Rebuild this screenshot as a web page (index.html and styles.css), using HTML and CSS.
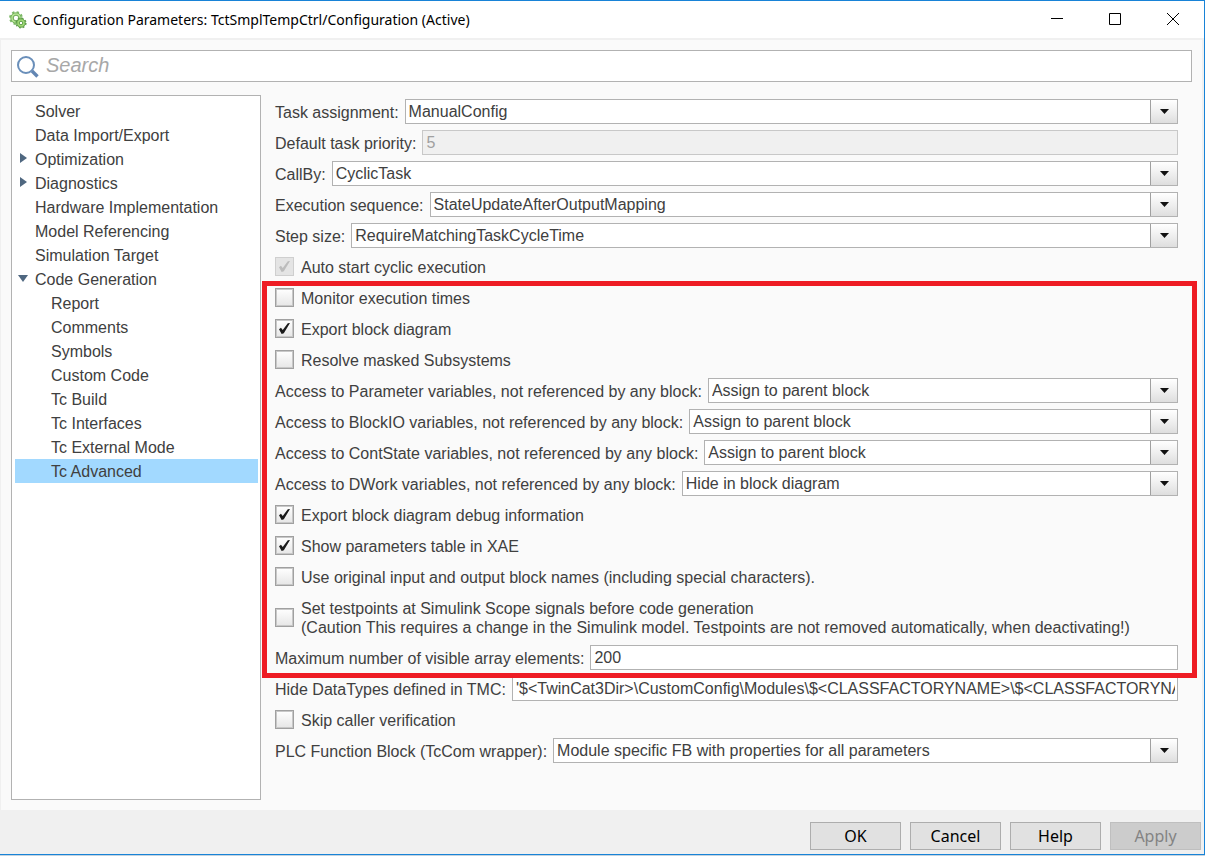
FILE: index.html
```html
<!DOCTYPE html>
<html lang="en">
<head>
<meta charset="utf-8">
<title>Configuration Parameters: TctSmplTempCtrl/Configuration (Active)</title>
<link rel="stylesheet" href="styles.css">
</head>
<body>
<div class="window">
  <header class="titlebar">
    <svg class="app-icon" viewBox="0 0 18 18" aria-hidden="true">
      <circle cx="7" cy="7" r="6" fill="none" stroke="#7cb866" stroke-width="1.800" stroke-dasharray="2.400 2.300"/>
      <circle cx="7" cy="7" r="5.200" fill="#b4e392" stroke="#76b35e" stroke-width="1"/>
      <circle cx="7" cy="7" r="2.800" fill="#fff" stroke="#6aa653" stroke-width="1"/>
      <circle cx="12" cy="12" r="4.800" fill="none" stroke="#5f9e4a" stroke-width="1.600" stroke-dasharray="1.900 1.870"/>
      <circle cx="12" cy="12" r="4.200" fill="#a4dd78" stroke="#5a9a46" stroke-width="1"/>
      <circle cx="12" cy="12" r="1.800" fill="#fff" stroke="#5a9a46" stroke-width="1"/>
    </svg>
    <h1 class="title">Configuration Parameters: TctSmplTempCtrl/Configuration (Active)</h1>
    <div class="caption-buttons">
      <button type="button" class="caption-button" aria-label="Minimize"><svg viewBox="0 0 14 14"><path d="M1 6.500H13" /></svg></button>
      <button type="button" class="caption-button" aria-label="Maximize"><svg viewBox="0 0 14 14"><path d="M1.500 1.500H12.500V12.500H1.500Z" /></svg></button>
      <button type="button" class="caption-button" aria-label="Close"><svg viewBox="0 0 14 14"><path d="M1 1L13 13M13 1L1 13" /></svg></button>
    </div>
  </header>

  <main class="content">
    <label class="search">
      <svg class="search-icon" viewBox="0 0 24 24" aria-hidden="true">
        <circle cx="10" cy="10" r="8" fill="none" stroke="#6a8fba" stroke-width="2"/>
        <path d="M16 16L21.500 21.500" stroke="#6286b3" stroke-width="3.400"/>
      </svg>
      <input class="search-input" type="search" placeholder="Search" aria-label="Search">
    </label>

    <div class="panes">
      <nav class="tree" aria-label="Categories">
        <ul>
          <li><a href="#">Solver</a></li>
          <li><a href="#">Data Import/Export</a></li>
          <li><a href="#" class="closed">Optimization</a></li>
          <li><a href="#" class="closed">Diagnostics</a></li>
          <li><a href="#">Hardware Implementation</a></li>
          <li><a href="#">Model Referencing</a></li>
          <li><a href="#">Simulation Target</a></li>
          <li><a href="#" class="open">Code Generation</a>
            <ul>
              <li><a href="#">Report</a></li>
              <li><a href="#">Comments</a></li>
              <li><a href="#">Symbols</a></li>
              <li><a href="#">Custom Code</a></li>
              <li><a href="#">Tc Build</a></li>
              <li><a href="#">Tc Interfaces</a></li>
              <li><a href="#">Tc External Mode</a></li>
              <li><a href="#" class="selected" aria-current="page">Tc Advanced</a></li>
            </ul>
          </li>
        </ul>
      </nav>

      <form class="form" id="settings">
        <div class="row">
          <label for="task">Task assignment:</label>
          <span class="dropdown"><select id="task"><option>ManualConfig</option></select></span>
        </div>
        <div class="row">
          <label for="priority">Default task priority:</label>
          <input class="text" id="priority" type="text" value="5" disabled>
        </div>
        <div class="row">
          <label for="callby">CallBy:</label>
          <span class="dropdown"><select id="callby"><option>CyclicTask</option></select></span>
        </div>
        <div class="row">
          <label for="sequence">Execution sequence:</label>
          <span class="dropdown"><select id="sequence"><option>StateUpdateAfterOutputMapping</option></select></span>
        </div>
        <div class="row">
          <label for="step">Step size:</label>
          <span class="dropdown"><select id="step"><option>RequireMatchingTaskCycleTime</option></select></span>
        </div>
        <div class="row row-check">
          <input class="check" id="autostart" type="checkbox" checked disabled>
          <label for="autostart">Auto start cyclic execution</label>
        </div>

        <div class="highlight">
          <div class="row row-check">
            <input class="check" id="monitor" type="checkbox">
            <label for="monitor">Monitor execution times</label>
          </div>
          <div class="row row-check">
            <input class="check" id="export" type="checkbox" checked>
            <label for="export">Export block diagram</label>
          </div>
          <div class="row row-check">
            <input class="check" id="resolve" type="checkbox">
            <label for="resolve">Resolve masked Subsystems</label>
          </div>
          <div class="row">
            <label for="param">Access to Parameter variables, not referenced by any block:</label>
            <span class="dropdown"><select id="param"><option>Assign to parent block</option></select></span>
          </div>
          <div class="row">
            <label for="blockio">Access to BlockIO variables, not referenced by any block:</label>
            <span class="dropdown"><select id="blockio"><option>Assign to parent block</option></select></span>
          </div>
          <div class="row">
            <label for="contstate">Access to ContState variables, not referenced by any block:</label>
            <span class="dropdown"><select id="contstate"><option>Assign to parent block</option></select></span>
          </div>
          <div class="row">
            <label for="dwork">Access to DWork variables, not referenced by any block:</label>
            <span class="dropdown"><select id="dwork"><option>Hide in block diagram</option></select></span>
          </div>
          <div class="row row-check">
            <input class="check" id="debug" type="checkbox" checked>
            <label for="debug">Export block diagram debug information</label>
          </div>
          <div class="row row-check">
            <input class="check" id="table" type="checkbox" checked>
            <label for="table">Show parameters table in XAE</label>
          </div>
          <div class="row row-check">
            <input class="check" id="names" type="checkbox">
            <label for="names">Use original input and output block names (including special characters).</label>
          </div>
          <div class="row row-check row-double">
            <input class="check" id="testpoints" type="checkbox">
            <label for="testpoints">Set testpoints at Simulink Scope signals before code generation<br>(Caution This requires a change in the Simulink model. Testpoints are not removed automatically, when deactivating!)</label>
          </div>
          <div class="row">
            <label for="maximum">Maximum number of visible array elements:</label>
            <input class="text" id="maximum" type="text" value="200">
          </div>
        </div>

        <div class="row">
          <label for="hide">Hide DataTypes defined in TMC:</label>
          <input class="text" id="hide" type="text" value="'$&lt;TwinCat3Dir&gt;\CustomConfig\Modules\$&lt;CLASSFACTORYNAME&gt;\$&lt;CLASSFACTORYNAME&gt;.tmc'">
        </div>
        <div class="row row-check">
          <input class="check" id="skip" type="checkbox">
          <label for="skip">Skip caller verification</label>
        </div>
        <div class="row">
          <label for="plc">PLC Function Block (TcCom wrapper):</label>
          <span class="dropdown"><select id="plc"><option>Module specific FB with properties for all parameters</option></select></span>
        </div>
      </form>
    </div>
  </main>

  <footer class="actions">
    <button type="submit" form="settings">OK</button>
    <button type="button">Cancel</button>
    <button type="button">Help</button>
    <button type="button" disabled>Apply</button>
  </footer>
</div>
</body>
</html>
```
FILE: styles.css
```css
* {
  box-sizing: border-box;
}

body {
  margin: 0;
  background: #c4d3df;
  color: #404040;
  font: 16px/20px "Liberation Sans", Arial, sans-serif;
}

button,
input,
select {
  font: inherit;
  color: inherit;
}

.window {
  display: flex;
  flex-direction: column;
  min-height: calc(100vh - 1px);
  margin-bottom: 1px;
  border: solid #1883d7;
  border-width: 1px 1px 1px 0;
  background: #f0f0f0;
}

/* Title bar */
.titlebar {
  display: flex;
  align-items: center;
  height: 37px;
  padding-left: 9px;
  background: #fff;
  color: #000;
}

.app-icon {
  width: 18px;
  height: 18px;
}

.title {
  flex: 1;
  margin: 0 0 0 6px;
  font: 14px/20px "Noto Sans", "Open Sans", sans-serif;
}

.caption-buttons {
  display: flex;
  padding: 0 2px 2px 0;
}

.caption-button {
  display: grid;
  place-items: center;
  width: 58px;
  height: 34px;
  padding: 0;
  border: 0;
  background: none;
}

.caption-button svg {
  width: 14px;
  height: 14px;
  fill: none;
  stroke: #000;
  stroke-width: 1;
}

/* Content */
.content {
  flex: 1;
  display: flex;
  flex-direction: column;
  gap: 13px;
  margin: 2px 2px 0 1px;
  padding: 10px;
  background: #fafafa;
}

.search {
  display: flex;
  align-items: center;
  height: 32px;
  padding-left: 4px;
  border: 1px solid #b2b2b2;
  background: #fff;
}

.search-icon {
  width: 24px;
  height: 24px;
  margin-top: 2px;
}

.search-input {
  flex: 1;
  height: 28px;
  margin: 0;
  padding: 0 6px 2px;
  border: 0;
  outline: 0;
  background: none;
  font-size: 20px;
  appearance: none;
}

.search-input::placeholder {
  color: #a8a8a8;
  font-style: italic;
}

.panes {
  flex: 1;
  display: flex;
  gap: 14px;
}

/* Category tree */
.tree {
  flex: none;
  width: 250px;
  padding: 3px 2px 3px 3px;
  border: 1px solid #b2b2b2;
  background: #fff;
}

.tree ul {
  margin: 0;
  padding: 0;
  list-style: none;
}

.tree a {
  position: relative;
  display: block;
  padding: 3px 0 1px 20px;
  color: inherit;
  text-decoration: none;
}

.tree ul ul a {
  padding-left: 36px;
}

.tree .selected {
  background: #a2d9ff;
}

.closed::before,
.open::before {
  content: "";
  position: absolute;
  background: #4f6780;
}

.closed::before {
  top: 6px;
  left: 5px;
  width: 7px;
  height: 10px;
  clip-path: polygon(0 0, 100% 50%, 0 100%);
}

.open::before {
  top: 8px;
  left: 3px;
  width: 10px;
  height: 7px;
  clip-path: polygon(0 0, 100% 0, 50% 100%);
}

/* Settings form */
.form,
.highlight {
  display: flex;
  flex-direction: column;
  gap: 6px;
}

.form {
  flex: 1;
  min-width: 0;
  padding: 4px 14px 0 0;
}

.row {
  display: flex;
  align-items: center;
  gap: 6px;
  height: 25px;
}

.row-check {
  gap: 7px;
}

.row-double {
  height: 44px;
}

.row label {
  padding-top: 2px;
}

.row-double label {
  line-height: 19px;
}

.text,
.dropdown {
  flex: 1;
  min-width: 0;
  height: 25px;
}

.text,
.dropdown select {
  margin: 0;
  padding: 0 3px;
  border: 1px solid #b2b2b2;
  border-radius: 0;
  background: #fff;
}

.text {
  padding-right: 2px;
}

.text:disabled {
  background: #f0f0f0;
  border-color: #c8c8c8;
  color: #a0a0a0;
}

.dropdown {
  position: relative;
  display: flex;
}

.dropdown select {
  flex: 1;
  min-width: 0;
  padding-right: 30px;
  appearance: none;
}

.dropdown::before {
  content: "";
  position: absolute;
  inset: 1px 1px 1px auto;
  width: 26px;
  border-left: 1px solid #a0a0a0;
  background: linear-gradient(#fff, #ececec 60%, #dedede);
  pointer-events: none;
}

.dropdown::after {
  content: "";
  position: absolute;
  top: 10px;
  right: 9px;
  width: 9px;
  height: 5px;
  background: #111;
  clip-path: polygon(0 0, 100% 0, 50% 100%);
  pointer-events: none;
}

.check {
  flex: none;
  position: relative;
  width: 19px;
  height: 19px;
  margin: 0;
  border: 1px solid #a0a0a0;
  box-shadow: inset 0 0 0 1px #c8c8c8;
  background: linear-gradient(#fff, #e6e6e6);
  appearance: none;
}

.check:checked::before {
  content: "";
  position: absolute;
  inset: 3px;
  background: #1a1a1a;
  clip-path: polygon(0 56%, 18% 44%, 34% 64%, 80% 2%, 100% 0, 44% 94%, 24% 100%);
}

.check:disabled {
  border-color: #cfcfcf;
  box-shadow: none;
  background: #e4e4e4;
}

.check:disabled::before {
  background: #bcbcbc;
}

/* Frame drawn around the annotated settings */
.highlight {
  position: relative;
}

.highlight::after {
  content: "";
  position: absolute;
  inset: -4px -19px -8px -13px;
  border: 5px solid #ee1c24;
  pointer-events: none;
}

/* Dialog buttons */
.actions {
  display: flex;
  justify-content: flex-end;
  gap: 9px;
  padding: 12px 3px 4px;
}

.actions button {
  width: 91px;
  height: 28px;
  padding: 0;
  border: 1px solid #adadad;
  background: #e1e1e1;
  color: #000;
  font: 16px/24px "Noto Sans", "Open Sans", sans-serif;
}

.actions button:disabled {
  border-color: #bfbfbf;
  background: #ccc;
  color: #838383;
}
```
